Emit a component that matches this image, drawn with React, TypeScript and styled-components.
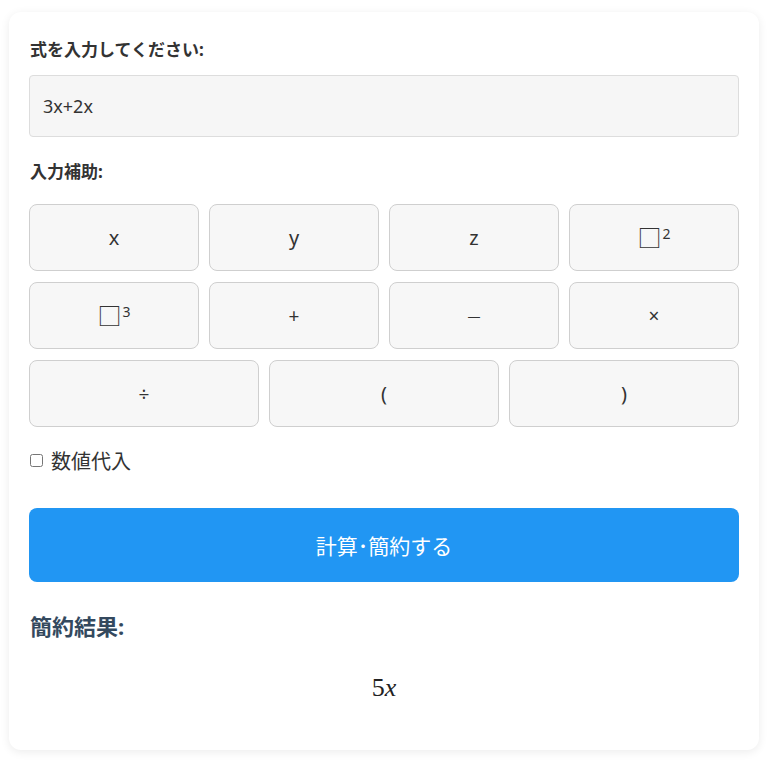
import React, { useState } from "react";
import styled, { createGlobalStyle } from "styled-components";

const GlobalStyle = createGlobalStyle`
  html, body {
    margin: 0;
    padding: 0;
    background: #ffffff;
    font-family: "Noto Sans", "Noto Sans CJK JP", sans-serif;
    color: #333;
  }
`;

const Page = styled.div`
  padding: 12px 11px 14px 9px;
`;

const Card = styled.div`
  background: #fff;
  border-radius: 12px;
  box-shadow: 0 2px 10px rgba(0, 0, 0, 0.08);
  padding: 20px 20px 47px;
`;

const Label = styled.div`
  font-size: 17px;
  font-weight: 700;
  color: #333;
  line-height: 24px;
  margin: 6px 0 13px 1px;
`;

const ExprInput = styled.input`
  display: block;
  box-sizing: border-box;
  width: 100%;
  height: 62px;
  padding: 0 13px;
  font-family: "Noto Sans", "Noto Sans CJK JP", sans-serif;
  font-size: 18px;
  color: #333;
  background: #f6f6f6;
  border: 1px solid #ddd;
  border-radius: 4px;
  margin-bottom: 23px;
  outline: none;
`;

const Keypad = styled.div`
  display: grid;
  grid-template-columns: repeat(12, 1fr);
  gap: 11px 10px;
  margin-top: 20px;
`;

const Key = styled.button<{ $span: number; $size?: number }>`
  grid-column: span ${(p) => p.$span};
  height: 67px;
  box-sizing: border-box;
  background: #f7f7f7;
  border: 1px solid #cfcfcf;
  border-radius: 8px;
  font-family: "Noto Sans", "Noto Sans CJK JP", sans-serif;
  font-size: ${(p) => p.$size ?? 20}px;
  color: #333;
  cursor: pointer;
  display: flex;
  align-items: center;
  justify-content: center;
  padding: 0;
`;

const Box = styled.span`
  font-size: 24px;
  line-height: 1;
`;

const Sup = styled.sup`
  font-size: 14px;
  margin-left: 1px;
  position: relative;
  top: -4px;
`;

const CheckRow = styled.label`
  display: flex;
  align-items: center;
  gap: 8px;
  margin: 19px 0 0 1px;
  font-size: 20px;
  color: #333;

  input {
    width: 13px;
    height: 13px;
    margin: 0;
  }
`;

const SubmitButton = styled.button`
  display: block;
  width: 100%;
  height: 74px;
  margin-top: 33px;
  background: #2196f3;
  color: #fff;
  border: none;
  border-radius: 8px;
  font-family: "Noto Sans", "Noto Sans CJK JP", sans-serif;
  font-size: 21px;
  cursor: pointer;
`;

const ResultTitle = styled.h3`
  margin: 29px 0 0 1px;
  font-size: 22px;
  font-weight: 700;
  color: #34495e;
  line-height: 30px;
`;

const ResultMath = styled.div`
  text-align: center;
  margin-top: 32px;
  font-family: "Liberation Serif", "DejaVu Serif", serif;
  font-size: 26px;
  color: #222;

  i {
    font-style: italic;
  }
`;

type KeyDef = { label: React.ReactNode; span: number; size?: number };

const keys: KeyDef[] = [
  { label: "x", span: 3 },
  { label: "y", span: 3 },
  { label: "z", span: 3 },
  { label: <><Box>□</Box><Sup>2</Sup></>, span: 3 },
  { label: <><Box>□</Box><Sup>3</Sup></>, span: 3 },
  { label: "+", span: 3, size: 19 },
  { label: "—", span: 3, size: 13 },
  { label: "×", span: 3, size: 19 },
  { label: "÷", span: 4, size: 19 },
  { label: "(", span: 4, size: 20 },
  { label: ")", span: 4, size: 20 },
];

export default function App() {
  const [expr, setExpr] = useState("3x+2x");
  const [subst, setSubst] = useState(false);

  return (
    <Page>
      <GlobalStyle />
      <Card>
        <Label>式を入力してください:</Label>
        <ExprInput value={expr} onChange={(e) => setExpr(e.target.value)} />
        <Label>入力補助:</Label>
        <Keypad>
          {keys.map((k, i) => (
            <Key key={i} $span={k.span} $size={k.size}>
              {k.label}
            </Key>
          ))}
        </Keypad>
        <CheckRow>
          <input type="checkbox" checked={subst} onChange={(e) => setSubst(e.target.checked)} />
          数値代入
        </CheckRow>
        <SubmitButton>計算･簡約する</SubmitButton>
        <ResultTitle>簡約結果:</ResultTitle>
        <ResultMath>
          5<i>x</i>
        </ResultMath>
      </Card>
    </Page>
  );
}
